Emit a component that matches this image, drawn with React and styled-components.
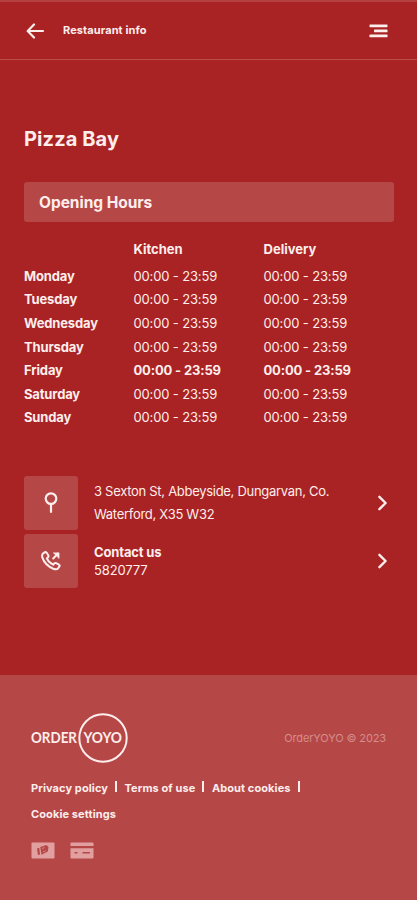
import React from 'react';
import styled, { createGlobalStyle } from 'styled-components';

const GlobalStyle = createGlobalStyle`
    * {
        box-sizing: border-box;
    }
    body {
        margin: 0;
        background: #a92224;
        color: #fdeeec;
        font-family: Inter, "Liberation Sans", sans-serif;
    }
`;

const Page = styled.div`
    width: 100%;
    height: 900px;
    display: flex;
    flex-direction: column;
    overflow: hidden;
`;
const Header = styled.header`
    height: 60px;
    display: flex;
    align-items: center;
    padding: 0px 29px 0px 26px;
    border-top: 2px solid #b4403f;
    border-bottom: 1px solid #b94b4b;
`;
const HeaderTitle = styled.div`
    flex: 1;
    margin-left: 18px;
    padding-bottom: 2px;
    font-size: 11px;
    line-height: 16px;
    font-weight: 700;
    letter-spacing: 0.1px;
`;
const Main = styled.main`
    height: 615px;
    padding: 64px 23px 0px 24px;
`;
const Title = styled.h1`
    margin: 0;
    font-size: 20px;
    line-height: 30px;
    font-weight: 700;
    letter-spacing: 0.1px;
`;
const SectionTitle = styled.h2`
    height: 40px;
    margin: 28px 0px 14px;
    padding: 0px 15px;
    border-radius: 3px;
    background: #b64747;
    font-size: 15.5px;
    line-height: 41px;
    font-weight: 700;
    letter-spacing: -0.03px;
`;
const Hours = styled.div`
    display: grid;
    grid-template-columns: 109.5px 130px 1fr;
    grid-template-rows: 28px repeat(7, 23.6px);
    align-items: center;
`;
const Cell = styled.div`
    font-size: 13px;
    line-height: 20px;
    font-weight: ${({ $bold }) => ($bold ? 650 : 400)};
    letter-spacing: ${({ $spacing }) => $spacing || 0}px;
    white-space: nowrap;
`;
const HeadCell = styled(Cell)`
    padding-bottom: 3px;
`;
const Links = styled.div`
    display: flex;
    flex-direction: column;
    gap: 4px;
    margin-top: 47px;
`;
const LinkRow = styled.div`
    height: 54px;
    display: flex;
    align-items: center;
    padding-right: 6.5px;
`;
const IconBox = styled.div`
    width: 54px;
    height: 54px;
    display: flex;
    align-items: center;
    justify-content: center;
    border-radius: 3px;
    background: #b64747;
`;
const LinkText = styled.div`
    flex: 1;
    margin-left: 16px;
    font-size: 13px;
    line-height: ${({ $line }) => $line}px;
    letter-spacing: ${({ $spacing }) => $spacing || 0}px;
    white-space: nowrap;
`;
const Strong = styled.div`
    font-weight: 650;
`;
const Footer = styled.footer`
    flex: 1;
    padding: 38px 31px 0px;
    background: #b64747;
`;
const FooterTop = styled.div`
    display: flex;
    align-items: center;
    justify-content: space-between;
`;
const Copyright = styled.div`
    font-size: 11px;
    line-height: 16px;
    color: #d48d8b;
    letter-spacing: -0.12px;
`;
const FooterNav = styled.nav`
    display: flex;
    flex-wrap: wrap;
    width: 300px;
    margin-top: 12px;
`;
const FooterLink = styled.a`
    display: flex;
    align-items: center;
    height: 26px;
    font-size: 11px;
    font-weight: 700;
    letter-spacing: 0.1px;
    white-space: nowrap;
`;
const Divider = styled.span`
    width: 2px;
    height: 11px;
    margin: 6px 7.5px 0px 7px;
    background: #fdeeec;
`;
const Payments = styled.div`
    display: flex;
    gap: 15px;
    margin-top: 15px;
`;

const hours = [
  { day: 'Monday', kitchen: '00:00 - 23:59', delivery: '00:00 - 23:59' },
  { day: 'Tuesday', kitchen: '00:00 - 23:59', delivery: '00:00 - 23:59' },
  { day: 'Wednesday', kitchen: '00:00 - 23:59', delivery: '00:00 - 23:59' },
  { day: 'Thursday', kitchen: '00:00 - 23:59', delivery: '00:00 - 23:59' },
  { day: 'Friday', kitchen: '00:00 - 23:59', delivery: '00:00 - 23:59', today: true },
  { day: 'Saturday', kitchen: '00:00 - 23:59', delivery: '00:00 - 23:59' },
  { day: 'Sunday', kitchen: '00:00 - 23:59', delivery: '00:00 - 23:59' },
];

const BackIcon = () => (
  <svg width="19" height="16" viewBox="0 0 19 16" fill="none" stroke="#fdeeec" strokeWidth="2.2" strokeLinecap="round" strokeLinejoin="round">
    <path d="M17 8H2M8 1.5 1.7 8 8 14.5" />
  </svg>
);

const MenuIcon = () => (
  <svg width="19" height="14" viewBox="0 0 19 14" fill="#fdeeec">
    <rect x="0.5" y="0.5" width="18" height="2.7" rx="0.6" />
    <rect x="5" y="5.6" width="13.5" height="2.7" rx="0.6" />
    <rect x="0.5" y="10.6" width="18" height="2.7" rx="0.6" />
  </svg>
);

const PinIcon = () => (
  <svg width="14" height="22" viewBox="0 0 14 22" fill="none" stroke="#fdeeec" strokeWidth="2.2" strokeLinecap="round">
    <circle cx="7" cy="6.6" r="5.3" />
    <path d="M7 12v8" />
  </svg>
);

const PhoneIcon = () => (
  <svg width="20" height="20" viewBox="0 0 20 20" fill="none" stroke="#fdeeec" strokeWidth="2" strokeLinecap="round" strokeLinejoin="round">
    <path d="M2.2 2.3 4 1.1Q5 .7 5.7 1.8L7.4 4.6Q7.8 5.6 7 6.3L5.8 7.4Q7.8 11.8 12.2 13.7L13.4 12.4Q14.2 11.6 15.2 12.1L18 13.7Q19 14.4 18.4 15.4L17.1 17.3Q15.7 19 12.3 17.7 4 14.3 1.3 6.4.6 3.8 2.2 2.3Z" />
    <path d="M12.2 7.5 16.8 2.6" />
    <path d="M12.8 1.9H18V7Z" fill="#fdeeec" strokeWidth="0.8" />
  </svg>
);

const ChevronIcon = () => (
  <svg width="11" height="16" viewBox="0 0 11 16" fill="none" stroke="#fdeeec" strokeWidth="2.4" strokeLinecap="round" strokeLinejoin="round">
    <path d="M2.4 1.8 8.6 8 2.4 14.2" />
  </svg>
);

const Logo = () => (
  <svg width="98" height="50" viewBox="0 0 98 50" fill="#fdeeec" fontFamily="Lato, sans-serif" fontWeight="700" fontSize="15">
    <text x="0" y="30.3" textLength="46" lengthAdjust="spacingAndGlyphs">ORDER</text>
    <circle cx="72" cy="25" r="23.7" fill="none" stroke="#fdeeec" strokeWidth="2" />
    <text x="52.5" y="30.3" textLength="38.5" lengthAdjust="spacingAndGlyphs">YOYO</text>
  </svg>
);

const CashIcon = () => (
  <svg width="24" height="17" viewBox="0 0 24 17">
    <rect x="0.5" y="0.5" width="23" height="16" rx="1" fill="#e1a09f" />
    <path d="M6 6.5 8.3 5.8 9 12.5 7 13ZM9.2 5 15.5 3 17.5 5 16.8 9.5 10.5 12.8Z" fill="#b64747" />
    <path d="M11 6.5 13.5 5.6M12 10 14.5 8.8" stroke="#e1a09f" strokeWidth="0.7" />
  </svg>
);

const CardIcon = () => (
  <svg width="24" height="17" viewBox="0 0 24 17">
    <path d="M1.5.5H22.5Q23.5.5 23.5 1.5V4H.5V1.5Q.5.5 1.5.5ZM.5 6.3H23.5V15.5Q23.5 16.5 22.5 16.5H1.5Q.5 16.5.5 15.5Z" fill="#e1a09f" />
    <path d="M4.5 10.8H7.5M12.5 10.8H20" stroke="#b64747" strokeWidth="1.5" />
  </svg>
);

const App = () => {
  return (
    <Page>
      <GlobalStyle />
      <Header>
        <BackIcon />
        <HeaderTitle>Restaurant info</HeaderTitle>
        <MenuIcon />
      </Header>
      <Main>
        <Title>Pizza Bay</Title>
        <SectionTitle>Opening Hours</SectionTitle>
        <Hours>
          <HeadCell />
          <HeadCell $bold>Kitchen</HeadCell>
          <HeadCell $bold>Delivery</HeadCell>
          {hours.map((row) => (
            <React.Fragment key={row.day}>
              <Cell $bold $spacing={-0.15}>{row.day}</Cell>
              <Cell $bold={row.today} $spacing={-0.15}>{row.kitchen}</Cell>
              <Cell $bold={row.today} $spacing={-0.15}>{row.delivery}</Cell>
            </React.Fragment>
          ))}
        </Hours>
        <Links>
          <LinkRow>
            <IconBox><PinIcon /></IconBox>
            <LinkText $line={23} $spacing={-0.29}>
              3 Sexton St, Abbeyside, Dungarvan, Co.<br />
              Waterford, X35 W32
            </LinkText>
            <ChevronIcon />
          </LinkRow>
          <LinkRow>
            <IconBox><PhoneIcon /></IconBox>
            <LinkText $line={18} $spacing={-0.15}>
              <Strong>Contact us</Strong>
              5820777
            </LinkText>
            <ChevronIcon />
          </LinkRow>
        </Links>
      </Main>
      <Footer>
        <FooterTop>
          <Logo />
          <Copyright>OrderYOYO © 2023</Copyright>
        </FooterTop>
        <FooterNav>
          <FooterLink>Privacy policy</FooterLink>
          <Divider />
          <FooterLink>Terms of use</FooterLink>
          <Divider />
          <FooterLink>About cookies</FooterLink>
          <Divider />
          <FooterLink>Cookie settings</FooterLink>
        </FooterNav>
        <Payments>
          <CashIcon />
          <CardIcon />
        </Payments>
      </Footer>
    </Page>
  );
};

export default App;
